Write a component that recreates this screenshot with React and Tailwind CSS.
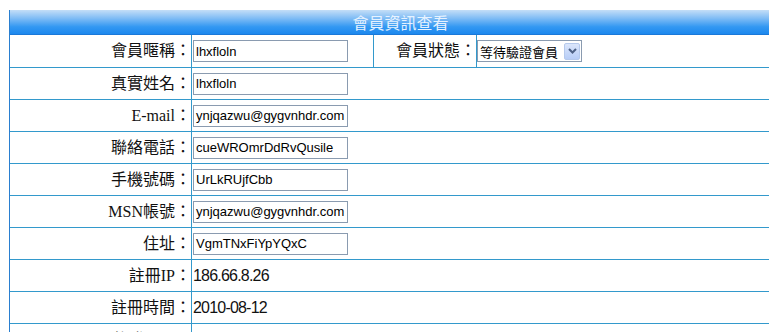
import React from "react";

const cjk = '"Noto Sans CJK TC", "Noto Sans CJK SC", sans-serif';
const labelFont = { fontFamily: '"Liberation Serif", "Noto Sans CJK TC", serif' };

function Input({ value }) {
  return (
    <div className="ml-px h-[22px] w-[155px] border border-[#8a9bb0] bg-white flex items-center pl-[2px] text-[13px] text-black font-['Liberation_Sans',sans-serif] leading-none overflow-hidden whitespace-nowrap">
      {value}
    </div>
  );
}

function Label({ children, w = "w-[182px]" }) {
  return (
    <div
      className={`${w} shrink-0 h-full border-r border-[#3399cc] flex items-center justify-end text-[16px] text-[#111] whitespace-nowrap`}
      style={labelFont}
    >
      {children}
    </div>
  );
}

function Row({ label, children }) {
  return (
    <div className="h-[32px] border-t border-[#3399cc] flex items-center">
      <Label>{label}</Label>
      <div className="flex-1 h-full flex items-center">{children}</div>
    </div>
  );
}

function Plain({ children }) {
  return (
    <div className="ml-px text-[16px] tracking-[-0.8px] text-[#111] font-['Liberation_Sans',sans-serif] leading-none">
      {children}
    </div>
  );
}

export default function App() {
  return (
    <div className="w-[769px] h-[332px] overflow-hidden bg-white">
      <div className="ml-[9px] mt-[10px] w-[782px] border-l border-[#2a7fd0]">
        <div
          className="h-[25px] flex items-center justify-center text-[16px] text-[#e6f2ff] border-b border-[#1a78d8] bg-[linear-gradient(to_bottom,#c4def7,#7fbcf5_35%,#3398f2_70%,#1c88ee)]"
          style={{ fontFamily: cjk }}
        >
          會員資訊查看
        </div>
        <div className="h-[32px] flex items-center">
          <Label>會員暱稱：</Label>
          <div className="w-[182px] shrink-0 h-full border-r border-[#3399cc] flex items-center">
            <Input value="lhxfloln" />
          </div>
          <Label w="w-[103px]">會員狀態：</Label>
          <div className="flex-1 h-full flex items-center">
            <div className="h-[22px] w-[105px] border border-[#8a9bb0] bg-white flex items-center pl-[2px] pr-px">
              <span
                className="flex-1 text-[13px] text-black leading-none whitespace-nowrap"
                style={{ fontFamily: cjk }}
              >
                等待驗證會員
              </span>
              <span className="w-[16px] h-[17px] rounded-[2px] border border-[#b5c9ec] bg-[linear-gradient(to_bottom,#dbe6fb,#b7cdf7)] flex items-center justify-center">
                <svg width="9" height="6" viewBox="0 0 9 6">
                  <path d="M1 1 L4.5 4.5 L8 1" fill="none" stroke="#4d6185" strokeWidth="2" />
                </svg>
              </span>
            </div>
          </div>
        </div>
        <Row label="真實姓名：">
          <Input value="lhxfloln" />
        </Row>
        <Row label="E-mail：">
          <Input value="ynjqazwu@gygvnhdr.com" />
        </Row>
        <Row label="聯絡電話：">
          <Input value="cueWROmrDdRvQusile" />
        </Row>
        <Row label="手機號碼：">
          <Input value="UrLkRUjfCbb" />
        </Row>
        <Row label="MSN帳號：">
          <Input value="ynjqazwu@gygvnhdr.com" />
        </Row>
        <Row label="住址：">
          <Input value="VgmTNxFiYpYQxC" />
        </Row>
        <Row label="註冊IP：">
          <Plain>186.66.8.26</Plain>
        </Row>
        <Row label="註冊時間：">
          <Plain>2010-08-12</Plain>
        </Row>
        <Row label="最後登入IP：">
          <span />
        </Row>
      </div>
    </div>
  );
}
